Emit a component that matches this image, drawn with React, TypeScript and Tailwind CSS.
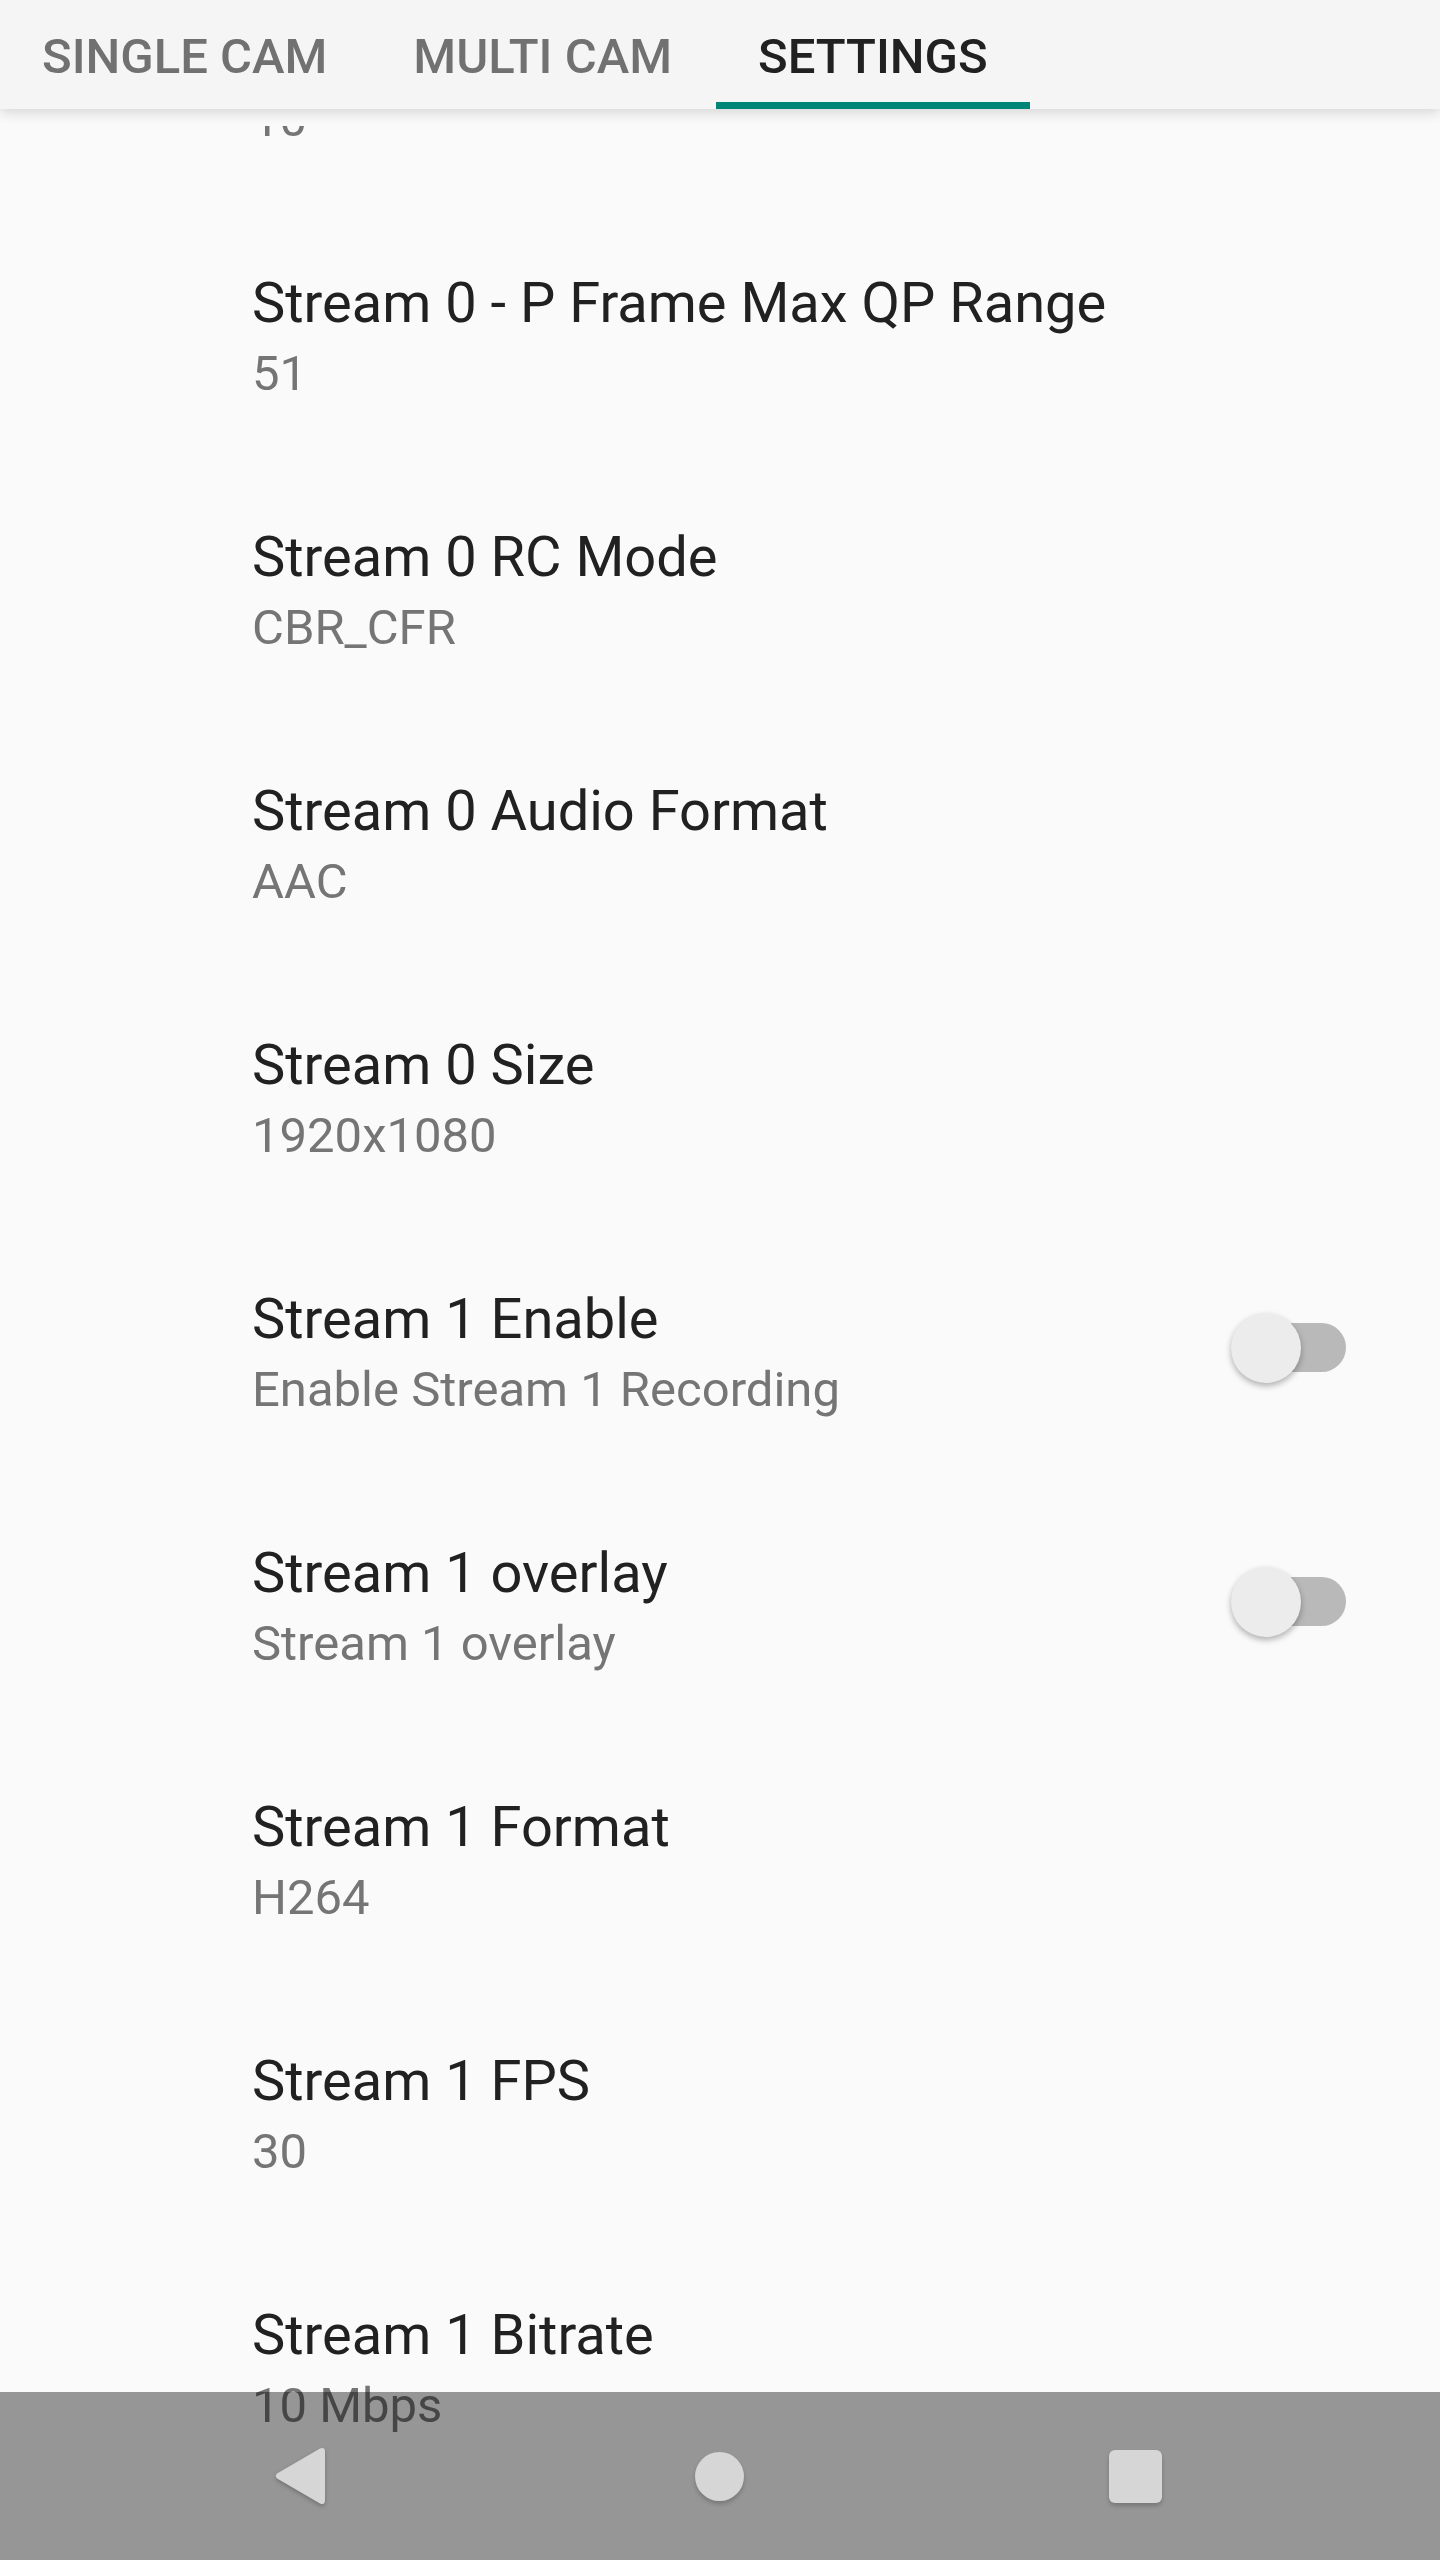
import { useState } from "react";

const tabs = ["SINGLE CAM", "MULTI CAM", "SETTINGS"];

type Preference = { id: string; title: string; summary: string; toggle?: boolean };

const preferences: Preference[] = [
  { id: "s0-qp", title: "Stream 0 - P Frame Max QP Range", summary: "51" },
  { id: "s0-rc", title: "Stream 0 RC Mode", summary: "CBR_CFR" },
  { id: "s0-audio", title: "Stream 0 Audio Format", summary: "AAC" },
  { id: "s0-size", title: "Stream 0 Size", summary: "1920x1080" },
  { id: "s1-enable", title: "Stream 1 Enable", summary: "Enable Stream 1 Recording", toggle: true },
  { id: "s1-overlay", title: "Stream 1 overlay", summary: "Stream 1 overlay", toggle: true },
  { id: "s1-format", title: "Stream 1 Format", summary: "H264" },
  { id: "s1-fps", title: "Stream 1 FPS", summary: "30" },
  { id: "s1-bitrate", title: "Stream 1 Bitrate", summary: "10 Mbps" },
];

function TabBar() {
  const [active, setActive] = useState("SETTINGS");
  return (
    <header className="relative z-10 shrink-0 bg-[#f5f5f5] shadow-[0_4px_12px_rgba(0,0,0,0.14)]">
      <div role="tablist" className="flex gap-0.5">
        {tabs.map((tab) => (
          <button
            key={tab}
            type="button"
            role="tab"
            aria-selected={tab === active}
            onClick={() => setActive(tab)}
            className={
              tab === active
                ? "border-b-[7px] border-[#008577] px-[42px] pt-7 pb-4 text-[49px] leading-[58px] font-medium whitespace-nowrap text-[#212121]"
                : "border-b-[7px] border-transparent px-[42px] pt-7 pb-4 text-[49px] leading-[58px] font-medium whitespace-nowrap text-[#717171]"
            }
          >
            {tab}
          </button>
        ))}
      </div>
    </header>
  );
}

function Texts({ title, summary }: { title: string; summary: string }) {
  return (
    <span className="flex min-w-0 flex-1 flex-col">
      <span className="text-[56px] leading-[74px] text-[#212121]">{title}</span>
      <Summary text={summary} />
    </span>
  );
}

function Summary({ text }: { text: string }) {
  return <span className="text-[49px] leading-[68px] text-[#757575]">{text}</span>;
}

function PreferenceRow({ id, title, summary, toggle }: Preference) {
  if (toggle) {
    return (
      <label htmlFor={id} className="flex items-center pt-[53px] pr-[94px] pb-[59px] pl-[252px]">
        <Texts title={title} summary={summary} />
        <input
          id={id}
          type="checkbox"
          role="switch"
          className="relative mb-3 h-[49px] w-[110px] shrink-0 appearance-none rounded-full bg-[#b9b9b9] before:absolute before:-top-[10px] before:-left-[5px] before:size-[70px] before:rounded-full before:bg-[#ececec] before:shadow-[0_3px_6px_rgba(0,0,0,0.3)] before:content-[''] checked:bg-[#80c2bb] checked:before:left-[45px] checked:before:bg-[#008577]"
        />
      </label>
    );
  }
  return (
    <button type="button" className="flex w-full pt-[53px] pr-[94px] pb-[59px] pl-[252px] text-left">
      <Texts title={title} summary={summary} />
    </button>
  );
}

function NavigationBar() {
  return (
    <nav className="absolute inset-x-0 bottom-0 z-20 flex h-[168px] bg-black/40 px-[97px]">
      <button type="button" aria-label="Back" className="flex flex-1 items-center justify-center">
        <svg viewBox="0 0 70 70" className="size-[70px] fill-[#d6d6d6] drop-shadow-[0_2px_2px_rgba(0,0,0,0.25)]">
          <path d="M7.5 32.2 50 7.6Q55 5.5 55 11V59Q55 64.500 50 62.400L7.500 37.800Q4 35 7.500 32.200Z" />
        </svg>
      </button>
      <button type="button" aria-label="Home" className="flex flex-1 items-center justify-center">
        <span className="size-[49px] rounded-full bg-[#d6d6d6] shadow-[0_3px_4px_rgba(0,0,0,0.2)]" />
      </button>
      <button type="button" aria-label="Recent apps" className="flex flex-1 items-center justify-center">
        <span className="size-[53px] rounded-[6px] bg-[#d6d6d6] shadow-[0_3px_4px_rgba(0,0,0,0.2)]" />
      </button>
    </nav>
  );
}

export default function App() {
  return (
    <div className="relative flex h-screen flex-col overflow-hidden bg-[#fafafa] font-['Roboto',sans-serif]">
      <TabBar />
      <main className="mt-[17px] min-h-0 flex-1 overflow-hidden">
        <div className="-mt-10 flex pb-[59px] pl-[252px]">
          <Summary text="10" />
        </div>
        {preferences.map((preference) => (
          <PreferenceRow key={preference.id} {...preference} />
        ))}
      </main>
      <NavigationBar />
    </div>
  );
}
